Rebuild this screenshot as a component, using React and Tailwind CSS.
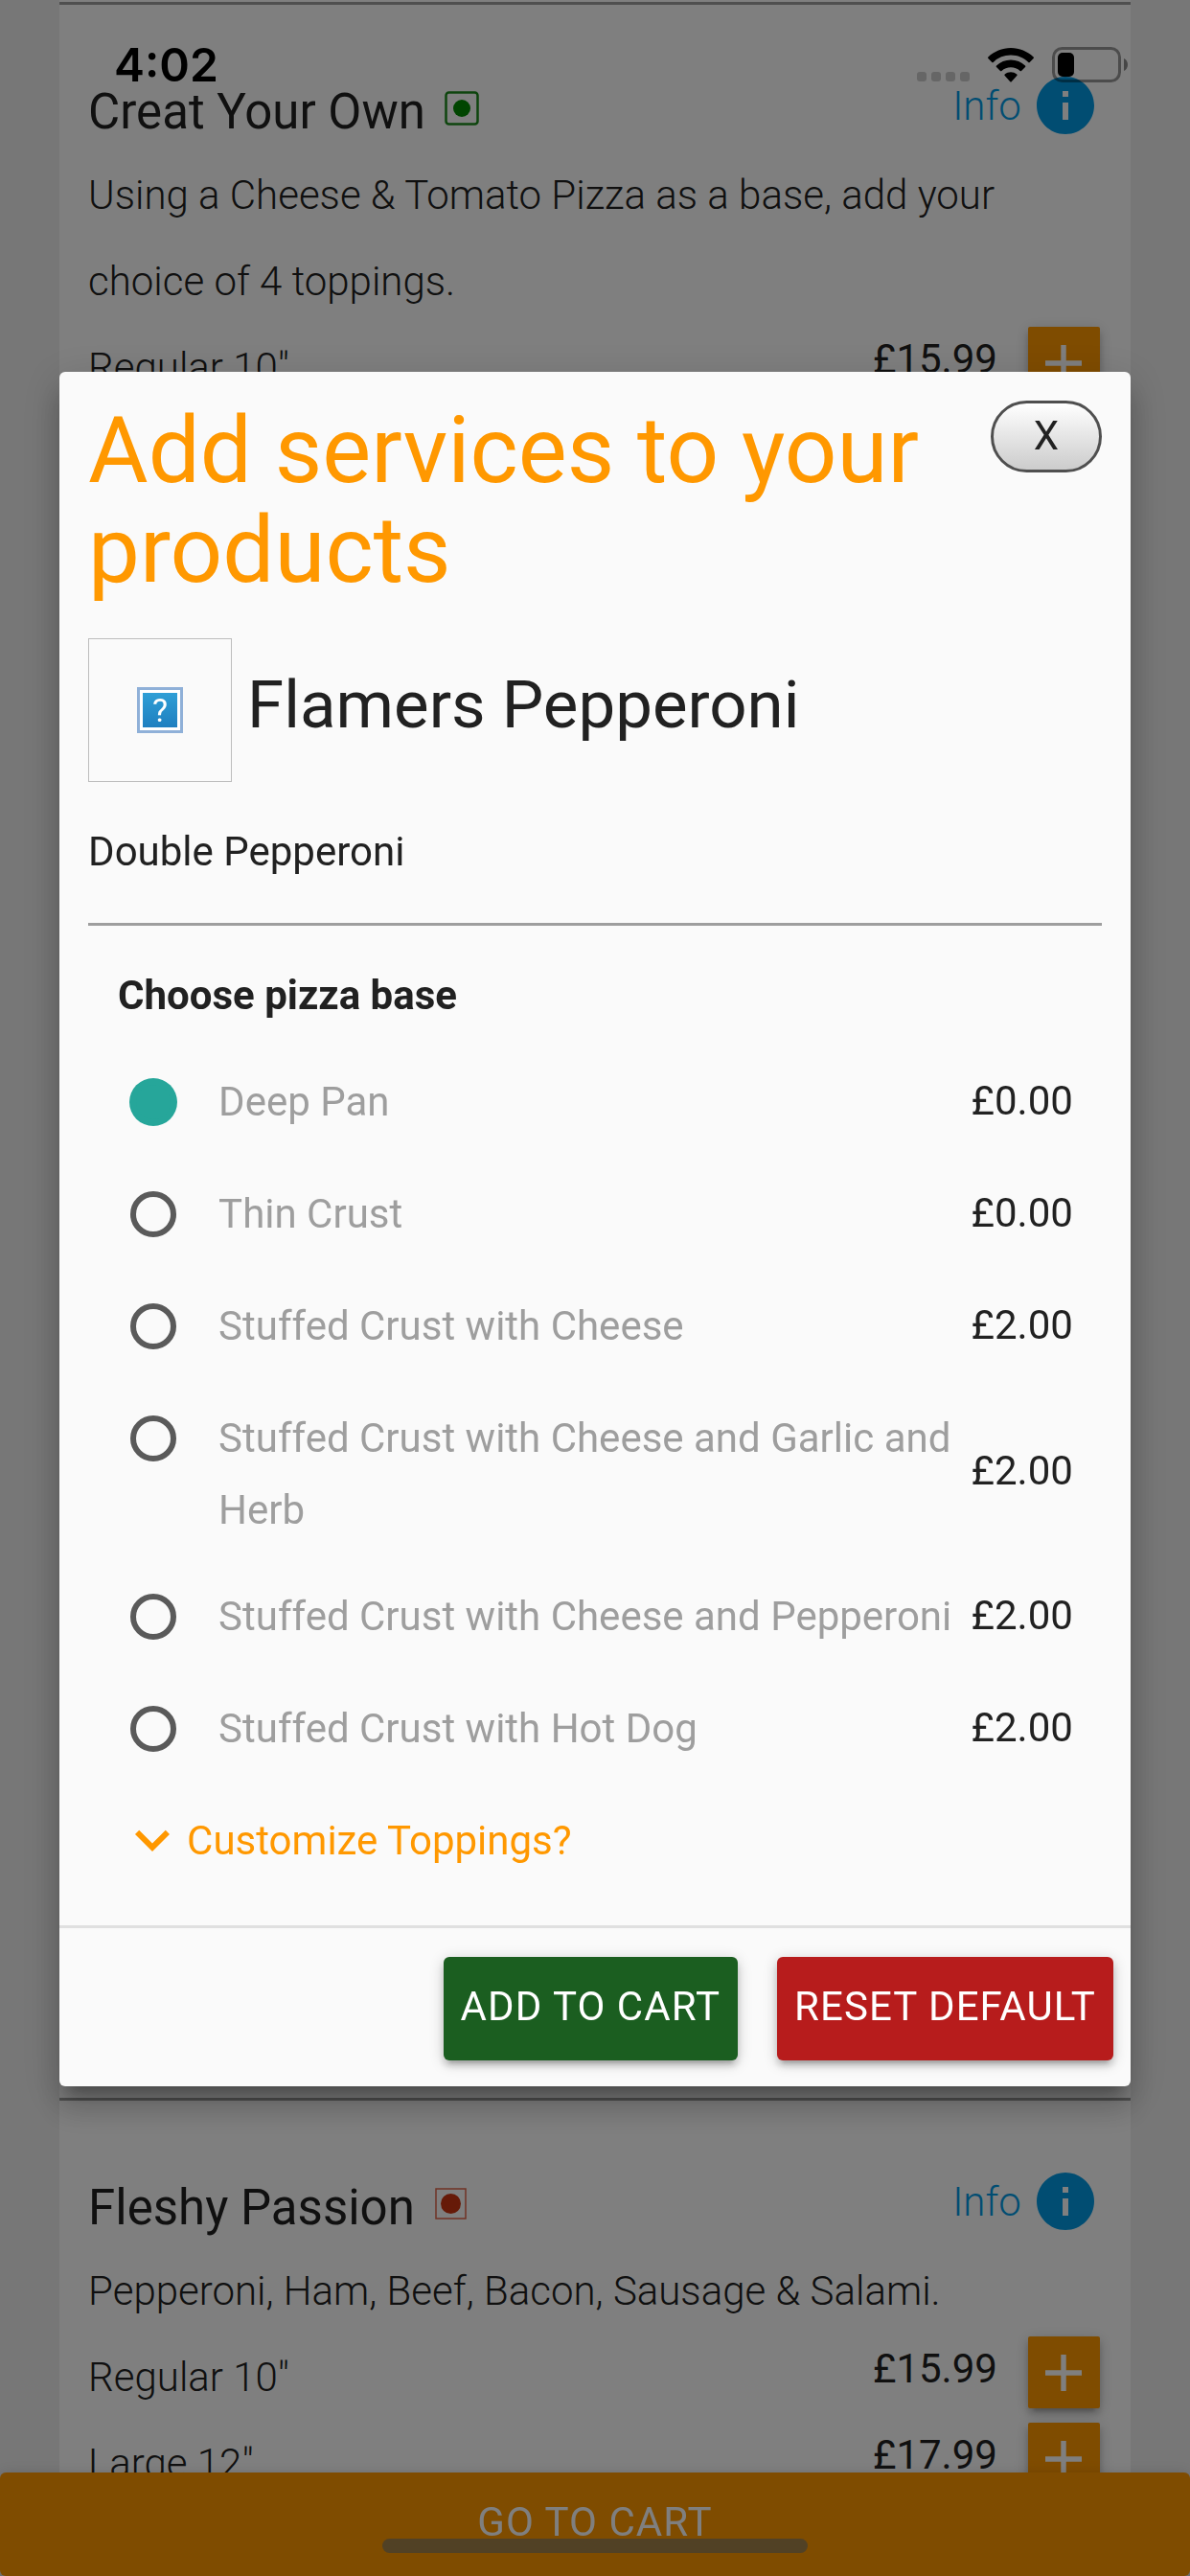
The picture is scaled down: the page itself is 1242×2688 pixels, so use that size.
import React, { useState } from "react";

const bases = [
  { id: "deep-pan", name: "Deep Pan", price: "£0.00" },
  { id: "thin-crust", name: "Thin Crust", price: "£0.00" },
  { id: "cheese", name: "Stuffed Crust with Cheese", price: "£2.00" },
  { id: "garlic-herb", name: "Stuffed Crust with Cheese and Garlic and Herb", price: "£2.00" },
  { id: "pepperoni", name: "Stuffed Crust with Cheese and Pepperoni", price: "£2.00" },
  { id: "hot-dog", name: "Stuffed Crust with Hot Dog", price: "£2.00" },
];

function VegBadge() {
  return (
    <svg className="mb-2 size-9" viewBox="0 0 36 36" fill="none" aria-label="Vegetarian">
      <rect x="1.5" y="1.5" width="33" height="33" rx="3" stroke="#1c8a1c" strokeWidth="2.5" />
      <circle cx="18" cy="18" r="9" fill="#008a00" />
    </svg>
  );
}

function MeatBadge() {
  return (
    <svg className="mb-2 size-9" viewBox="0 0 36 36" fill="none" aria-label="Contains meat">
      <rect x="2" y="2" width="31" height="31" stroke="#e0654a" strokeWidth="1.5" />
      <circle cx="17.5" cy="17.5" r="10.5" fill="#cc3510" />
    </svg>
  );
}

function InfoIcon() {
  return (
    <svg className="size-[72px]" viewBox="0 0 24 24" fill="currentColor" aria-hidden="true">
      <path d="M12 2C6.48 2 2 6.48 2 12s4.48 10 10 10 10-4.48 10-10S17.52 2 12 2zm1 15h-2v-6h2v6zm0-8h-2V7h2v2z" />
    </svg>
  );
}

// One product in the menu list behind the modal
function Product({ name, badge, description, sizes, className }) {
  return (
    <article className={`border-t-3 border-[#9e9e9e] bg-white pt-[69px] pr-8 pl-[30px] ${className}`}>
      <div className="flex h-[85px] items-start justify-between">
        <h2 className="flex h-full items-center gap-5 text-[51px] leading-[60px]">
          {name}
          {badge}
        </h2>
        <a href="#info" className="flex items-center gap-[10px] font-light text-[#039be5]">
          Info
          <InfoIcon />
        </a>
      </div>
      <p className="leading-[90px] font-light">{description}</p>
      {sizes.map((size) => (
        <div key={size.label} className="flex h-[90px] items-start">
          <span className="flex-1 leading-[90px] font-light">{size.label}</span>
          <span className="mr-8 leading-[72px]">{size.price}</span>
          <button
            type="button"
            aria-label={`Add ${name} ${size.label}`}
            className="mt-0.5 flex size-[75px] items-center justify-center rounded-xs bg-[#ff9800] text-white shadow-[0_6px_6px_0_rgba(0,0,0,0.14),0_9px_3px_-6px_rgba(0,0,0,0.12),0_3px_15px_0_rgba(0,0,0,0.2)]"
          >
            <svg className="size-[38px]" viewBox="0 0 14 14" fill="currentColor" aria-hidden="true">
              <path d="M14 8H8v6H6V8H0V6h6V0h2v6h6v2z" />
            </svg>
          </button>
        </div>
      ))}
    </article>
  );
}

function StatusBar() {
  return (
    <div className="fixed inset-x-0 top-0 z-30 flex h-[135px] items-center justify-between pr-16 pl-[119px] text-black">
      <span className="font-[Inter,sans-serif] text-[48px] leading-9 font-semibold">4:02</span>
      <div className="flex items-center">
        <div className="mt-6 mr-[19px] flex gap-[5px]">
          <i className="size-[10px] rounded-[3px] bg-black/20" />
          <i className="size-[10px] rounded-[3px] bg-black/20" />
          <i className="size-[10px] rounded-[3px] bg-black/20" />
          <i className="size-[10px] rounded-[3px] bg-black/20" />
        </div>
        <svg className="mr-[19px] h-9 w-12" viewBox="0 0 48 36" aria-hidden="true">
          <path d="M24 0C14.9 0 6.6 3.6.4 9.4a1 1 0 0 0 0 1.5l3.9 4a1 1 0 0 0 1.4 0A26.5 26.5 0 0 1 24 7.6c7.1 0 13.5 2.8 18.3 7.3a1 1 0 0 0 1.4 0l3.9-4a1 1 0 0 0 0-1.5C41.4 3.6 33.1 0 24 0z" />
          <path d="M24 12.6c-5.8 0-11 2.2-15 5.8a1 1 0 0 0 0 1.5l4 4.1a1 1 0 0 0 1.4 0 14.2 14.2 0 0 1 19.2 0 1 1 0 0 0 1.4 0l4-4.1a1 1 0 0 0 0-1.5c-4-3.6-9.2-5.8-15-5.8z" />
          <path d="M24 25.2c-2.4 0-4.6.9-6.300 2.300a1 1 0 0 0 0 1.500l5.600 6.200a1 1 0 0 0 1.400 0l5.600-6.200a1 1 0 0 0 0-1.500A9.800 9.800 0 0 0 24 25.200z" />
        </svg>
        <svg className="h-[37px] w-20" viewBox="0 0 80 37" aria-hidden="true">
          <rect x="1.5" y="1.5" width="69" height="34" rx="9" fill="none" stroke="#000" strokeOpacity=".4" strokeWidth="3" />
          <rect x="6" y="6" width="17" height="25" rx="5" />
          <path d="M75 12c2.5 1.200 4 3.600 4 6.500s-1.500 5.300-4 6.500z" fillOpacity=".45" />
        </svg>
      </div>
    </div>
  );
}

function ServicesModal() {
  const [base, setBase] = useState("deep-pan");

  return (
    <div
      role="dialog"
      aria-modal="true"
      aria-labelledby="modal-title"
      className="mx-auto w-[90%] rounded-md bg-[#fafafa] shadow-[0_24px_30px_3px_rgba(0,0,0,0.14),0_9px_42px_6px_rgba(0,0,0,0.12),0_15px_15px_-9px_rgba(0,0,0,0.3)]"
    >
      <div className="px-[30px] pt-[30px] pb-[53px]">
        <div className="flex items-start justify-between">
          <h3 id="modal-title" className="text-[96px] leading-[104px] text-[#ff9800]">
            Add services to your products
          </h3>
          <button
            type="button"
            aria-label="Close"
            className="h-[75px] w-[116px] shrink-0 rounded-full border-3 border-[#4f4f4f] bg-linear-to-b from-white to-[#cccccc] pb-0.5"
          >
            X
          </button>
        </div>

        {/* Product summary */}
        <div className="mt-10 flex items-center gap-4">
          <div className="flex size-[150px] items-center justify-center border border-[#bdbdbd]">
            {/* Placeholder shown when the product photo is missing */}
            <div className="flex size-12 items-center justify-center border-3 border-[#8fb0d8] bg-white">
              <span className="flex size-9 items-center justify-center bg-linear-to-b from-[#2f9fd6] to-[#1f7fc0] text-[34px] leading-none text-white">
                ?
              </span>
            </div>
          </div>
          <h4 className="pb-[10px] text-[69px] leading-[76px]">Flamers Pepperoni</h4>
        </div>
        <p className="mt-7 mb-[29px] leading-[90px]">Double Pepperoni</p>
        <hr className="border-t-3 border-[#9e9e9e]" />

        {/* Pizza base options */}
        <fieldset className="mt-7 pr-[30px] pl-[31px]">
          <legend className="mb-1.5 leading-[90px] font-bold">Choose pizza base</legend>
          {bases.map((item) => (
            <div key={item.id} className="flex min-h-[117px] items-start leading-[75px]">
              <label
                htmlFor={item.id}
                className="flex flex-1 items-start gap-11 pt-[22px] pb-[14px] pl-[13px] text-[#9e9e9e]"
              >
                <span className="flex h-[75px] items-center">
                  <input
                    id={item.id}
                    type="radio"
                    name="base"
                    checked={base === item.id}
                    onChange={() => setBase(item.id)}
                    className="size-12 appearance-none rounded-full border-6 border-[#5a5a5a] checked:border-[#26a69a] checked:bg-[#26a69a] checked:ring-1 checked:ring-[#26a69a]"
                  />
                </span>
                {item.name}
              </label>
              <span className="self-center">{item.price}</span>
            </div>
          ))}
        </fieldset>

        <button type="button" className="mt-[23px] ml-[31px] flex items-center text-[#ff9800]">
          <svg className="size-[72px]" viewBox="0 0 24 24" fill="currentColor" aria-hidden="true">
            <path d="M16.59 8.59L12 13.17 7.41 8.59 6 10l6 6 6-6z" />
          </svg>
          Customize Toppings?
        </button>
      </div>

      <div className="flex justify-end gap-[41px] border-t-3 border-[#e0e0e0] pt-[30px] pr-[18px] pb-[27px]">
        <button
          type="button"
          className="h-[108px] rounded-md bg-[#1b5e20] px-[18px] pb-1.5 tracking-wide text-white uppercase shadow-[0_6px_6px_0_rgba(0,0,0,0.14),0_9px_3px_-6px_rgba(0,0,0,0.12),0_3px_15px_0_rgba(0,0,0,0.2)]"
        >
          Add to cart
        </button>
        <button
          type="button"
          className="h-[108px] rounded-md bg-[#b71c1c] px-[18px] pb-1.5 tracking-wide text-white uppercase shadow-[0_6px_6px_0_rgba(0,0,0,0.14),0_9px_3px_-6px_rgba(0,0,0,0.12),0_3px_15px_0_rgba(0,0,0,0.2)]"
        >
          Reset default
        </button>
      </div>
    </div>
  );
}

export default function App() {
  return (
    <div className="font-[Roboto,sans-serif] text-[42px] text-[#212121]">
      {/* Menu list */}
      <main className="flex min-h-screen flex-col bg-[#eeeeee] px-[5%]">
        <div className="h-0.5 bg-white" />
        <Product
          className="flex-1"
          name="Creat Your Own"
          badge={<VegBadge />}
          description="Using a Cheese & Tomato Pizza as a base, add your choice of 4 toppings."
          sizes={[{ label: 'Regular 10"', price: "£15.99" }]}
        />
        <Product
          className="pb-[72px]"
          name="Fleshy Passion"
          badge={<MeatBadge />}
          description="Pepperoni, Ham, Beef, Bacon, Sausage & Salami."
          sizes={[
            { label: 'Regular 10"', price: "£15.99" },
            { label: 'Large 12"', price: "£17.99" },
          ]}
        />
      </main>

      <button
        type="button"
        className="fixed inset-x-0 bottom-0 h-[108px] rounded-md bg-[#ff9800] pb-1.5 tracking-wide text-white uppercase shadow-[0_3px_15px_0_rgba(0,0,0,0.2)]"
      >
        Go to cart
      </button>

      {/* Dimmed backdrop with the modal on top */}
      <div className="fixed inset-0 z-10 overflow-hidden bg-black/50 pt-[388px]">
        <ServicesModal />
      </div>

      <StatusBar />
      <div className="fixed inset-x-0 bottom-6 z-30 mx-auto h-[15px] w-[444px] rounded-full bg-[#514125]" />
    </div>
  );
}
